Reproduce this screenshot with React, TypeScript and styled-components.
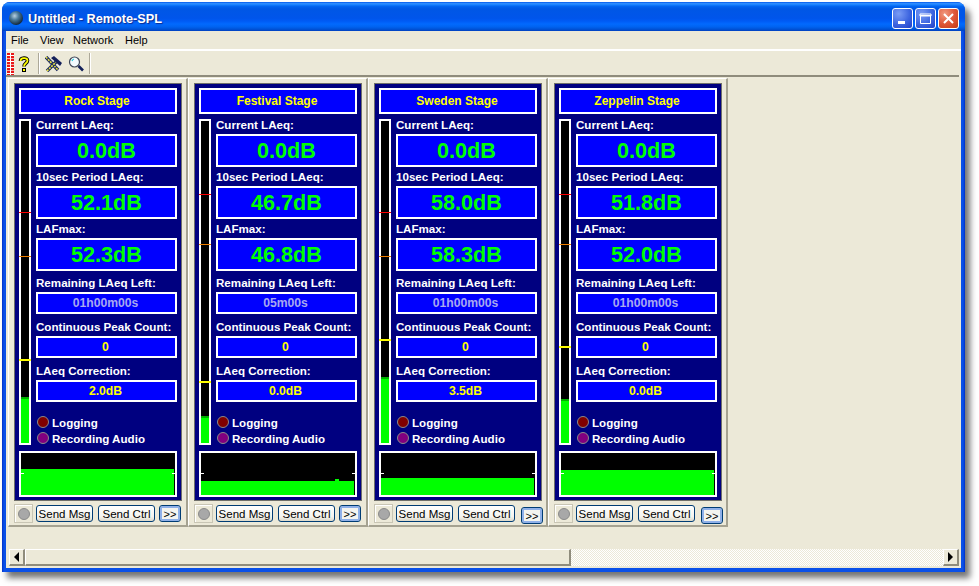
import React, { FC } from 'react';
import styled, { createGlobalStyle } from 'styled-components';

interface StageData {
  name: string;
  current: string;
  period: string;
  max: string;
  remaining: string;
  peaks: string;
  correction: string;
  level: number;
  ticks: [number, number, number];
  wave: number;
  bump?: boolean;
  nudged?: boolean;
}

const stages: StageData[] = [
  {
    name: 'Rock Stage',
    current: '0.0dB',
    period: '52.1dB',
    max: '52.3dB',
    remaining: '01h00m00s',
    peaks: '0',
    correction: '2.0dB',
    level: 46,
    ticks: [91, 135, 238],
    wave: 26,
  },
  {
    name: 'Festival Stage',
    current: '0.0dB',
    period: '46.7dB',
    max: '46.8dB',
    remaining: '05m00s',
    peaks: '0',
    correction: '0.0dB',
    level: 27,
    ticks: [73, 123, 260],
    wave: 14,
    bump: true,
  },
  {
    name: 'Sweden Stage',
    current: '0.0dB',
    period: '58.0dB',
    max: '58.3dB',
    remaining: '01h00m00s',
    peaks: '0',
    correction: '3.5dB',
    level: 66,
    ticks: [91, 135, 218],
    wave: 17,
    nudged: true,
  },
  {
    name: 'Zeppelin Stage',
    current: '0.0dB',
    period: '51.8dB',
    max: '52.0dB',
    remaining: '01h00m00s',
    peaks: '0',
    correction: '0.0dB',
    level: 44,
    ticks: [73, 123, 225],
    wave: 25,
    nudged: true,
  },
];

const tickColors = ['#ff0000', '#f08000', '#ffff00'];
const menus = [
  { label: 'File', width: 29 },
  { label: 'View', width: 33 },
  { label: 'Network', width: 52 },
  { label: 'Help', width: 30 },
];

const GlobalStyle = createGlobalStyle`
  html, body {
    margin: 0;
    background: #fff;
    overflow: hidden;
  }
  body {
    width: 979px;
    height: 586px;
    font-family: "Liberation Sans", Arial, sans-serif;
  }
`;

const Page = styled.div`
  padding: 2px;
`;

const Window = styled.div`
  width: 963px;
  height: 570px;
  display: flex;
  flex-direction: column;
  border-radius: 8px 8px 0 0;
  background: linear-gradient(90deg, #0030c8 0, #0a50e8 2px, #0a50e8 calc(100% - 2px), #0030c8 100%);
  box-shadow: 5px 6px 6px rgba(0, 0, 0, 0.55);
`;

const TitleBar = styled.div`
  height: 29px;
  box-sizing: border-box;
  flex: none;
  display: flex;
  align-items: center;
  padding: 4px 6px 0 6px;
  border-radius: 8px 8px 0 0;
  background: linear-gradient(
    180deg,
    #0058ee 0%,
    #3593ff 6%,
    #127dff 10%,
    #0262ee 16%,
    #0057e5 24%,
    #0055eb 56%,
    #005bf5 66%,
    #026afe 76%,
    #0062ef 86%,
    #0052d6 94%,
    #0040c0 100%
  );
`;

const AppIcon = styled.svg`
  width: 16px;
  height: 16px;
  flex: none;
  margin-top: -2px;
`;

const WindowTitle = styled.div`
  flex: 1;
  margin-left: 4px;
  font-size: 12.7px;
  font-weight: bold;
  color: #fff;
  text-shadow: 1px 1px 1px #0a2a90;
`;

const WindowControls = styled.div`
  display: flex;
  gap: 2px;
`;

const WindowButton = styled.div<{ $close?: boolean }>`
  width: 21px;
  height: 21px;
  box-sizing: border-box;
  border: 1px solid #fff;
  border-radius: 3px;
  display: flex;
  align-items: center;
  justify-content: center;
  background: ${p =>
    p.$close
      ? 'radial-gradient(circle at 30% 25%, #f09a80 0%, #e0583a 50%, #c23a14 100%)'
      : 'radial-gradient(circle at 30% 25%, #7a9cf5 0%, #3e66e0 55%, #2040c8 100%)'};
`;

const Client = styled.div`
  flex: 1;
  min-height: 0;
  margin: 0 4px 4px;
  display: flex;
  flex-direction: column;
  background: #ece9d8;
`;

const MenuBar = styled.div`
  height: 20px;
  flex: none;
  display: flex;
  align-items: center;
  box-sizing: border-box;
  border-bottom: 2px solid transparent;
  border-image: linear-gradient(180deg, #aca899 50%, #fff 50%) 2;
  padding-left: 5px;
  margin-bottom: 1px;
`;

const MenuItem = styled.span<{ $width: number }>`
  width: ${p => p.$width}px;
  font-size: 11px;
  color: #000;
`;

const Toolbar = styled.div`
  height: 23px;
  flex: none;
  display: flex;
  align-items: center;
  border-bottom: 2px solid #8f8c7c;
  margin-right: 2px;
  padding-left: 1px;
`;

const Gripper = styled.div`
  width: 7px;
  height: 22px;
  background:
    linear-gradient(90deg, transparent 3px, #fff 3px, #fff 4px, transparent 4px),
    repeating-linear-gradient(180deg, #e81818 0 2px, #fff 2px 3px, #e81818 3px 5px, #f2a8a8 5px 6px);
`;

const ToolSeparator = styled.div<{ $left: number }>`
  width: 1px;
  height: 21px;
  margin-left: ${p => p.$left}px;
  background: #aca899;
  border-right: 1px solid #fff;
`;

const ToolIcon = styled.svg<{ $left: number }>`
  flex: none;
  margin-left: ${p => p.$left}px;
`;

const PanelRow = styled.div`
  flex: none;
  display: flex;
  padding-left: 2px;
  margin-top: 1px;
`;

const Panel = styled.div`
  width: 180px;
  height: 449px;
  box-sizing: border-box;
  border-top: 1px solid #fff;
  border-left: 1px solid #fff;
  border-right: 2px solid #a5a291;
  border-bottom: 2px solid #a5a291;
  padding: 4px 0 0 5px;
`;

const Console = styled.div`
  width: 158px;
  height: 409px;
  border: 1px solid #6f6f6a;
  background: #000080;
  padding: 4px 4px 3px;
`;

const StageTitle = styled.div`
  height: 26px;
  box-sizing: border-box;
  border: 2px solid #fff;
  padding-right: 2px;
  background: #0000ff;
  color: #ffff00;
  font-size: 12px;
  font-weight: bold;
  display: flex;
  align-items: center;
  justify-content: center;
`;

const ConsoleBody = styled.div`
  display: flex;
  gap: 5px;
  margin-top: 5px;
  height: 326px;
`;

const Meter = styled.div`
  position: relative;
  width: 12px;
  box-sizing: border-box;
  border: 2px solid #fff;
  background: #000;
  display: flex;
  flex-direction: column;
  justify-content: flex-end;
  flex: none;
`;

const MeterLevel = styled.div<{ $height: number }>`
  height: ${p => p.$height}px;
  box-sizing: border-box;
  background: #00ff00;
  border-top: 2px solid #00b000;
`;

const MeterTick = styled.div<{ $top: number; $color: string; $thick: boolean }>`
  position: absolute;
  left: -2px;
  right: -2px;
  top: ${p => p.$top}px;
  height: ${p => (p.$thick ? 2 : 1)}px;
  background: ${p => p.$color};
`;

const Readouts = styled.div`
  flex: 1;
  display: flex;
  flex-direction: column;
  min-width: 0;
`;

const FieldGroup = styled.div<{ $gap: number; $top?: number }>`
  display: flex;
  flex-direction: column;
  gap: ${p => p.$gap}px;
  margin-top: ${p => p.$top ?? 0}px;
`;

const FieldLabel = styled.div`
  height: 15px;
  line-height: 12px;
  font-size: 11.6px;
  font-weight: bold;
  color: #fff;
  white-space: nowrap;
`;

const LargeValue = styled.div`
  height: 33px;
  box-sizing: border-box;
  border: 2px solid #fff;
  background: #0000ff;
  color: #00ff00;
  font-size: 21.6px;
  font-weight: bold;
  display: flex;
  align-items: center;
  justify-content: center;
`;

const SmallValue = styled.div<{ $color: string }>`
  height: 22px;
  box-sizing: border-box;
  border: 2px solid #fff;
  padding-right: 2px;
  background: #0000ff;
  color: ${p => p.$color};
  font-size: 12.2px;
  font-weight: bold;
  display: flex;
  align-items: center;
  justify-content: center;
`;

const StatusList = styled.div`
  margin-top: 12px;
  display: flex;
  flex-direction: column;
`;

const StatusRow = styled.div`
  height: 16px;
  display: flex;
  align-items: center;
  gap: 3px;
  padding-left: 1px;
  font-size: 11.6px;
  font-weight: bold;
  color: #fff;
`;

const Lamp = styled.span<{ $color: string }>`
  width: 12px;
  height: 12px;
  box-sizing: border-box;
  flex: none;
  border-radius: 50%;
  border: 1px solid #8a8a8a;
  background: ${p => p.$color};
`;

const Wave = styled.div`
  position: relative;
  height: 46px;
  margin-top: 6px;
  box-sizing: border-box;
  border: 2px solid #fff;
  background: #000;
  display: flex;
  flex-direction: column;
  justify-content: flex-end;
`;

const WaveFill = styled.div<{ $height: number; $bump?: boolean }>`
  position: relative;
  height: ${p => p.$height}px;
  margin-right: 1px;
  background: #00ff00;

  &::after {
    content: '';
    display: ${p => (p.$bump ? 'block' : 'none')};
    position: absolute;
    top: -2px;
    right: 15px;
    width: 4px;
    height: 2px;
    background: #00ff00;
  }
`;

const WaveTick = styled.div<{ $right?: boolean }>`
  position: absolute;
  top: 20px;
  ${p => (p.$right ? 'right: 0;' : 'left: 0;')}
  width: 3px;
  height: 1px;
  background: #fff;
`;

const ControlRow = styled.div`
  display: flex;
  margin-top: 3px;
  align-items: flex-start;
`;

const SignalBox = styled.div`
  width: 19px;
  height: 19px;
  box-sizing: border-box;
  border: 1px solid #c8c5b4;
  box-shadow: inset 1px 1px 0 #fff;
  display: flex;
  align-items: center;
  justify-content: center;
  flex: none;
`;

const SignalLamp = styled.span`
  width: 12px;
  height: 12px;
  box-sizing: border-box;
  border-radius: 50%;
  background: #a8a8a8;
  border: 1px solid #8a8a8a;
`;

const SendButton = styled.button<{ $left: number }>`
  width: 57px;
  height: 17px;
  margin: 1px 0 0 ${p => p.$left}px;
  padding: 0;
  box-sizing: border-box;
  border: 1px solid #003c74;
  border-radius: 3px;
  background: linear-gradient(180deg, #fff 0%, #f4f4ee 70%, #dcd8c8 100%);
  font-family: "Liberation Sans", Arial, sans-serif;
  font-size: 11.5px;
  color: #000;
  flex: none;
`;

const MoreButton = styled.button<{ $nudged?: boolean }>`
  width: 22px;
  height: 17px;
  margin: ${p => (p.$nudged ? '3px 0 0 6px' : '1px 0 0 4px')};
  padding: 0;
  box-sizing: border-box;
  border: 1px solid #003c74;
  border-radius: 3px;
  background: #f4f4f0;
  box-shadow: inset 0 0 0 2px #8fb0e8;
  font-family: "Liberation Sans", Arial, sans-serif;
  font-size: 11px;
  color: #000;
  flex: none;
`;

const Spacer = styled.div`
  flex: 1;
`;

const ScrollBar = styled.div`
  height: 17px;
  flex: none;
  display: flex;
  margin: 0 2px 2px 3px;
`;

const ScrollButton = styled.div`
  width: 16px;
  flex: none;
  box-sizing: border-box;
  background: #ece9d8;
  border: 1px solid;
  border-color: #fff #8f8c7c #8f8c7c #fff;
  border-width: 1px 2px 2px 1px;
  display: flex;
  align-items: center;
  justify-content: center;
`;

const Arrow = styled.span<{ $right?: boolean }>`
  width: 0;
  height: 0;
  border-top: 5px solid transparent;
  border-bottom: 5px solid transparent;
  ${p => (p.$right ? 'border-left: 5px solid #000;' : 'border-right: 5px solid #000;')}
`;

const ScrollThumb = styled.div`
  width: 546px;
  flex: none;
  box-sizing: border-box;
  background: #ece9d8;
  border: 1px solid;
  border-color: #fff #8f8c7c #8f8c7c #fff;
  border-width: 1px 2px 2px 1px;
`;

const ScrollTrack = styled.div`
  flex: 1;
  background: repeating-conic-gradient(#fff 0 25%, #ece9d8 0 50%) 0 0 / 2px 2px;
`;

const StagePanel: FC<{ stage: StageData }> = ({ stage }) => (
  <Panel>
    <Console>
      <StageTitle>{stage.name}</StageTitle>
      <ConsoleBody>
        <Meter>
          <MeterLevel $height={stage.level} />
          {stage.ticks.map((top, i) => (
            <MeterTick key={i} $top={top} $color={tickColors[i]} $thick={i === 2} />
          ))}
        </Meter>
        <Readouts>
          <FieldGroup $gap={4}>
            <div>
              <FieldLabel>Current LAeq:</FieldLabel>
              <LargeValue>{stage.current}</LargeValue>
            </div>
            <div>
              <FieldLabel>10sec Period LAeq:</FieldLabel>
              <LargeValue>{stage.period}</LargeValue>
            </div>
            <div>
              <FieldLabel>LAFmax:</FieldLabel>
              <LargeValue>{stage.max}</LargeValue>
            </div>
          </FieldGroup>
          <FieldGroup $gap={7} $top={6}>
            <div>
              <FieldLabel>Remaining LAeq Left:</FieldLabel>
              <SmallValue $color="#a8a8f0">{stage.remaining}</SmallValue>
            </div>
            <div>
              <FieldLabel>Continuous Peak Count:</FieldLabel>
              <SmallValue $color="#ffff00">{stage.peaks}</SmallValue>
            </div>
            <div>
              <FieldLabel>LAeq Correction:</FieldLabel>
              <SmallValue $color="#ffff00">{stage.correction}</SmallValue>
            </div>
          </FieldGroup>
          <StatusList>
            <StatusRow>
              <Lamp $color="#800000" />
              Logging
            </StatusRow>
            <StatusRow>
              <Lamp $color="#800080" />
              Recording Audio
            </StatusRow>
          </StatusList>
        </Readouts>
      </ConsoleBody>
      <Wave>
        <WaveFill $height={stage.wave} $bump={stage.bump} />
        <WaveTick />
        <WaveTick $right />
      </Wave>
    </Console>
    <ControlRow>
      <SignalBox>
        <SignalLamp />
      </SignalBox>
      <SendButton $left={3}>Send Msg</SendButton>
      <SendButton $left={5}>Send Ctrl</SendButton>
      <MoreButton $nudged={stage.nudged}>&gt;&gt;</MoreButton>
    </ControlRow>
  </Panel>
);

const App: FC = () => (
  <Page>
    <GlobalStyle />
    <Window>
      <TitleBar>
        <AppIcon viewBox="0 0 16 16">
          <defs>
            <radialGradient id="globe" cx="40%" cy="35%" r="65%">
              <stop offset="0%" stopColor="#b8d0e0" />
              <stop offset="45%" stopColor="#4a7a9a" />
              <stop offset="100%" stopColor="#12283c" />
            </radialGradient>
          </defs>
          <circle cx="8" cy="8" r="7" fill="url(#globe)" />
        </AppIcon>
        <WindowTitle>Untitled - Remote-SPL</WindowTitle>
        <WindowControls>
          <WindowButton>
            <svg width="13" height="13" viewBox="0 0 13 13">
              <rect x="2" y="9" width="7" height="3" fill="#fff" />
            </svg>
          </WindowButton>
          <WindowButton>
            <svg width="13" height="13" viewBox="0 0 13 13">
              <path d="M1.5 3.5h10v8h-10zM1 2h11v2H1z" fill="none" stroke="#fff" strokeWidth="1" />
            </svg>
          </WindowButton>
          <WindowButton $close>
            <svg width="13" height="13" viewBox="0 0 13 13">
              <path d="M2 2l9 9M11 2l-9 9" stroke="#fff" strokeWidth="2" />
            </svg>
          </WindowButton>
        </WindowControls>
      </TitleBar>
      <Client>
        <MenuBar>
          {menus.map(menu => (
            <MenuItem key={menu.label} $width={menu.width}>
              {menu.label}
            </MenuItem>
          ))}
        </MenuBar>
        <Toolbar>
          <Gripper />
          <ToolIcon $left={4} width="12" height="16" viewBox="0 0 12 16">
            <path d="M2.5 5C2.5 1.5 9.5 1 9.5 4.5C9.5 7.5 6 7 6 10.5" fill="none" stroke="#000" strokeWidth="3.6" />
            <path d="M2.5 5C2.5 1.5 9.5 1 9.5 4.5C9.5 7.5 6 7 6 10.5" fill="none" stroke="#ffff00" strokeWidth="1.8" />
            <rect x="4" y="12" width="4" height="4" fill="#000" />
            <rect x="5" y="13" width="2" height="2" fill="#ffff00" />
          </ToolIcon>
          <ToolSeparator $left={8} />
          <ToolIcon $left={5} width="18" height="16" viewBox="0 0 18 16">
            <path d="M1 1l12 13" stroke="#1a2a60" strokeWidth="3.4" />
            <path d="M1 1l12 13" stroke="#e8e040" strokeWidth="1.6" strokeDasharray="2 1" />
            <path d="M2 15L11 6" stroke="#1a2a60" strokeWidth="3.4" />
            <path d="M2 15L11 6" stroke="#f0e840" strokeWidth="1.6" strokeDasharray="2 1" />
            <path d="M6 2L9 0l8 7-2 3z" fill="#14205a" />
          </ToolIcon>
          <ToolIcon $left={5} width="16" height="16" viewBox="0 0 16 16">
            <circle cx="6.5" cy="6" r="5" fill="#f4fbff" stroke="#404858" strokeWidth="1.2" />
            <path d="M4 5a3 3 0 0 1 2-2" fill="none" stroke="#20c8d8" strokeWidth="1.2" />
            <path d="M10.5 10l4.5 4.5" stroke="#14205a" strokeWidth="2.6" />
          </ToolIcon>
          <ToolSeparator $left={5} />
        </Toolbar>
        <PanelRow>
          {stages.map(stage => (
            <StagePanel key={stage.name} stage={stage} />
          ))}
        </PanelRow>
        <Spacer />
        <ScrollBar>
          <ScrollButton>
            <Arrow />
          </ScrollButton>
          <ScrollThumb />
          <ScrollTrack />
          <ScrollButton>
            <Arrow $right />
          </ScrollButton>
        </ScrollBar>
      </Client>
    </Window>
  </Page>
);

export default App;
